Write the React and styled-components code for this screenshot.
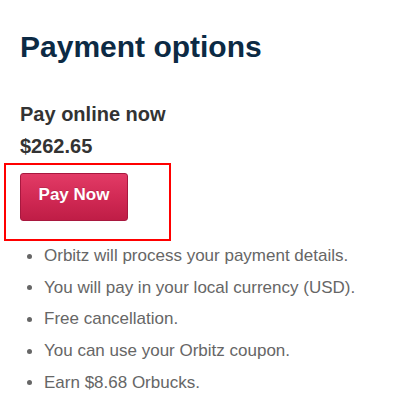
import React from 'react';
//Styling
import styled, { createGlobalStyle } from 'styled-components';

const GlobalStyle = createGlobalStyle`
	html, body {
		margin: 0;
		padding: 0;
		background: #ffffff;
	}
	body {
		font-family: 'Liberation Sans', Arial, sans-serif;
	}
`;

const perks = [
	'Orbitz will process your payment details.',
	'You will pay in your local currency (USD).',
	'Free cancellation.',
	'You can use your Orbitz coupon.',
	'Earn $8.68 Orbucks.',
];

const App = () => {
	return (
		<>
			<GlobalStyle />
			<Page>
				<Title>Payment options</Title>
				<Option>
					<OptionName>Pay online now</OptionName>
					<Price>$262.65</Price>
					<Highlight>
						<PayButton type='button'>Pay Now</PayButton>
					</Highlight>
					<Perks>
						{perks.map(perk => (
							<Perk key={perk}>{perk}</Perk>
						))}
					</Perks>
				</Option>
			</Page>
		</>
	);
};

const Page = styled.div`
	padding: 29px 20px 0;
	width: 402px;
	height: 420px;
	box-sizing: border-box;
	overflow: hidden;
`;

const Title = styled.h1`
	margin: 0 0 37px;
	font-size: 30px;
	line-height: 36px;
	font-weight: 700;
	color: #0c2a44;
`;

const Option = styled.section`
	display: flex;
	flex-direction: column;
	align-items: flex-start;
`;

const OptionName = styled.h2`
	margin: 0 0 8px;
	font-size: 20px;
	line-height: 24px;
	font-weight: 700;
	color: #333333;
`;

const Price = styled.div`
	margin: 0 0 5px;
	font-size: 20px;
	line-height: 24px;
	font-weight: 700;
	color: #333333;
`;

// red annotation frame around the button
const Highlight = styled.div`
	margin-left: -16px;
	width: 167px;
	height: 78px;
	box-sizing: border-box;
	border: 2px solid #ff0000;
	padding: 8px 0 0 14px;
`;

const PayButton = styled.button`
	display: flex;
	align-items: center;
	justify-content: center;
	width: 108px;
	height: 48px;
	box-sizing: border-box;
	padding: 0 0 4px;
	border: 1px solid #a8183f;
	border-radius: 3px;
	background: linear-gradient(to bottom, #e23b66 0%, #d22a55 50%, #bf1d46 100%);
	color: #ffffff;
	font-family: 'Liberation Sans', Arial, sans-serif;
	font-size: 17px;
	font-weight: 700;
	text-shadow: 0 -1px 0 rgba(0, 0, 0, 0.15);
	cursor: pointer;
`;

const Perks = styled.ul`
	list-style: none;
	margin: 3px 0 0;
	padding: 0 0 0 24px;
`;

const Perk = styled.li`
	position: relative;
	margin-bottom: 8px;
	font-size: 17px;
	line-height: 23.7px;
	color: #666666;
	white-space: nowrap;
	&::before {
		content: '';
		position: absolute;
		left: -17px;
		top: 9.5px;
		width: 5px;
		height: 5px;
		border-radius: 50%;
		background: #666666;
	}
`;

export default App;
